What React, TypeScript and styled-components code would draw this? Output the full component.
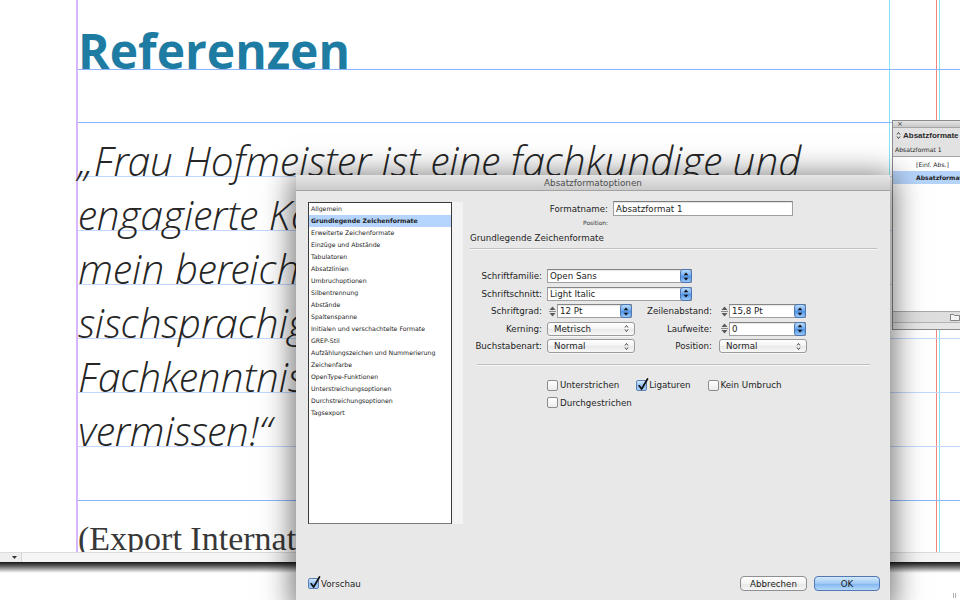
import React from "react";
import styled, { createGlobalStyle } from "styled-components";

const GlobalStyle = createGlobalStyle`
  html, body { margin: 0; padding: 0; background: #fff; }
  body { width: 960px; height: 600px; overflow: hidden; }
  * { box-sizing: border-box; }
`;

const UI = `"DejaVu Sans", "Lucida Grande", sans-serif`;

const Screen = styled.div`
  position: relative;
  width: 960px;
  height: 600px;
  overflow: hidden;
  display: flex;
  flex-direction: column;
  background: #fff;
`;

const DocView = styled.div`
  height: 552px;
  flex: none;
  display: flex;
  overflow: hidden;
  background-image: linear-gradient(
    to right,
    transparent 889px,
    #7fe6f6 889px,
    #7fe6f6 890px,
    transparent 890px,
    transparent 936px,
    #f2837f 936px,
    #f2837f 937px,
    transparent 937px,
    transparent 939px,
    #7fe6f6 939px,
    #7fe6f6 940px,
    transparent 940px
  );
`;

const Pasteboard = styled.div`
  width: 76px;
  flex: none;
`;

const PageColumn = styled.div`
  flex: 1;
  display: flex;
  flex-direction: column;
  border-left: 2px solid #d7b6ff;
`;

const Band = styled.div<{ $h: number; $tone: "guide" | "base"; $pt?: number }>`
  height: ${(p) => p.$h}px;
  flex: none;
  padding-top: ${(p) => p.$pt ?? 0}px;
  border-bottom: 1px solid ${(p) => (p.$tone === "guide" ? "#8db4ff" : "#c2d8ff")};
  white-space: nowrap;
`;

const Heading = styled.h1`
  margin: 0;
  font-family: "Open Sans", sans-serif;
  font-weight: 700;
  font-size: 48px;
  line-height: 1;
  color: #1e7ca3;
`;

const QuoteText = styled.div`
  font-family: "Open Sans Light", "Open Sans", sans-serif;
  font-style: italic;
  font-weight: 300;
  font-size: 41px;
  line-height: 1;
  color: #262626;
`;

const ExportText = styled.div`
  padding-top: 21px;
  font-family: "Liberation Serif", serif;
  font-size: 34px;
  line-height: 1;
  color: #383838;
  white-space: nowrap;
`;

const StatusStrip = styled.div`
  height: 10px;
  flex: none;
  display: flex;
  background: #f5f5f5;
  border-top: 1px solid #dcdcdc;
`;

const StatusCell = styled.div`
  width: 22px;
  display: flex;
  align-items: center;
  justify-content: flex-end;
  padding-right: 4px;
  border-right: 1px solid #d6d6d6;
  background: #eeeeee;
`;

const ShadowBand = styled.div`
  height: 11px;
  flex: none;
  background: linear-gradient(#161616, #5c5c5c 35%, #cfcfcf 80%, #ffffff);
`;

const Desk = styled.div`
  flex: 1;
  display: flex;
  justify-content: flex-end;
  align-items: flex-end;
  padding: 0 4px 2px 0;
`;

const Grip = styled.span`
  width: 3px;
  height: 5px;
  border-left: 1px solid #b0b0b0;
  border-right: 1px solid #b0b0b0;
`;

/* ---------- Absatzformate panel ---------- */

const Panel = styled.div`
  position: absolute;
  left: 892px;
  top: 120px;
  width: 90px;
  height: 210px;
  z-index: 2;
  display: flex;
  flex-direction: column;
  background: #e2e2e2;
  border: 1px solid #8c8c8c;
  font-family: ${UI};
  color: #1c1c1c;
`;

const PanelTitle = styled.div`
  height: 7px;
  flex: none;
  padding-left: 4px;
  font-size: 7px;
  line-height: 6px;
  color: #444;
  background: linear-gradient(#e4e4e4, #c8c8c8);
  border-bottom: 1px solid #a6a6a6;
`;

const PanelHeader = styled.div`
  height: 15px;
  flex: none;
  display: flex;
  align-items: center;
  gap: 2px;
  padding-left: 3px;
  font-family: "Liberation Sans", Arial, sans-serif;
  font-weight: 700;
  font-size: 8px;
  color: #2a2a2a;
`;

const PanelSub = styled.div`
  height: 14px;
  flex: none;
  padding-left: 2px;
  font-size: 6.1px;
  line-height: 13px;
  border-bottom: 1px solid #a4a4a4;
`;

const PanelList = styled.div`
  flex: 1;
  background: #fff;
  padding-top: 1px;
`;

const PanelItem = styled.div<{ $sel?: boolean }>`
  height: 13px;
  line-height: 13px;
  padding-left: 23px;
  font-size: 6.1px;
  white-space: nowrap;
  font-weight: ${(p) => (p.$sel ? 700 : 400)};
  background: ${(p) => (p.$sel ? "#b6d4fb" : "transparent")};
`;

const PanelFooter = styled.div`
  height: 12px;
  flex: none;
  display: flex;
  align-items: center;
  padding-left: 57px;
  background: #dedede;
  border-top: 1px solid #a8a8a8;
  border-bottom: 1px solid #b4b4b4;
`;

const PanelBase = styled.div`
  height: 6px;
  flex: none;
  background: #e6e6e6;
`;

/* ---------- Dialog ---------- */

const Dialog = styled.div`
  position: absolute;
  left: 296px;
  top: 175px;
  width: 594px;
  height: 430px;
  z-index: 3;
  display: flex;
  flex-direction: column;
  background: #e8e8e8;
  box-shadow: 0 4px 28px 4px rgba(0, 0, 0, 0.55);
  font-family: ${UI};
  font-size: 8.7px;
  color: #1e1e1e;
`;

const TitleBar = styled.div`
  height: 16px;
  flex: none;
  display: flex;
  align-items: center;
  justify-content: center;
  font-size: 8.8px;
  color: #4d4d4d;
  background: linear-gradient(#e6e6e6, #cbcbcb);
  border-bottom: 1px solid #a2a2a2;
`;

const Body = styled.div`
  flex: 1;
  display: flex;
  flex-direction: column;
  padding: 11px 10px 14px 12px;
`;

const Main = styled.div`
  display: flex;
  gap: 7px;
`;

const ListWrap = styled.div`
  width: 155px;
  height: 322px;
  flex: none;
  display: flex;
  background: #f3f3f3;
`;

const CategoryList = styled.ul`
  margin: 0;
  padding: 0;
  list-style: none;
  width: 144px;
  height: 100%;
  background: #fff;
  border: 1px solid #3a3a3a;
  border-bottom-color: #7a7a7a;
`;

const CategoryItem = styled.li<{ $sel?: boolean }>`
  height: 12px;
  line-height: 12px;
  padding-left: 2px;
  font-size: 6.2px;
  color: #222;
  white-space: nowrap;
  font-weight: ${(p) => (p.$sel ? 700 : 400)};
  background: ${(p) => (p.$sel ? "#b5d5fe" : "transparent")};
`;

const FormColumn = styled.div`
  width: 407px;
  display: flex;
  flex-direction: column;
`;

const NameRow = styled.div`
  margin-top: -1px;
  height: 15px;
  display: flex;
  align-items: center;
`;

const FieldLabel = styled.span<{ $w: number; $mr: number }>`
  width: ${(p) => p.$w}px;
  margin-right: ${(p) => p.$mr}px;
  flex: none;
  text-align: right;
  white-space: nowrap;
`;

const TextInput = styled.div<{ $w: number }>`
  width: ${(p) => p.$w}px;
  height: 15px;
  flex: none;
  display: flex;
  align-items: center;
  padding-left: 2px;
  background: #fff;
  border: 1px solid #9e9e9e;
  border-top-color: #7c7c7c;
  box-shadow: inset 0 1px 1px rgba(0, 0, 0, 0.12);
  white-space: nowrap;
`;

const TinyLabel = styled.div`
  width: 138px;
  margin-top: 3px;
  height: 9px;
  line-height: 9px;
  text-align: right;
  font-size: 5.9px;
  color: #333;
`;

const SectionTitle = styled.div`
  margin-top: 4px;
  height: 12px;
  line-height: 12px;
`;

const Rule = styled.div<{ $inset: number; $mt: number }>`
  margin: ${(p) => p.$mt}px ${(p) => p.$inset}px 0;
  height: 2px;
  flex: none;
  border-top: 1px solid #c0c0c0;
  border-bottom: 1px solid #f7f7f7;
`;

const FormGrid = styled.div`
  margin-top: 19px;
  display: flex;
  flex-direction: column;
  gap: 3.5px;
`;

const FormRow = styled.div`
  height: 14px;
  display: flex;
  align-items: center;
`;

const Cell = styled.div<{ $w: number }>`
  width: ${(p) => p.$w}px;
  flex: none;
  display: flex;
  align-items: center;
`;

const Combo = styled.div<{ $w: number }>`
  width: ${(p) => p.$w}px;
  height: 14px;
  flex: none;
  display: flex;
  align-items: center;
  background: #fff;
  border: 1px solid #a0a0a0;
  border-top-color: #858585;
  box-shadow: inset 0 1px 1px rgba(0, 0, 0, 0.1);
`;

const ComboText = styled.span`
  flex: 1;
  padding-left: 2px;
  white-space: nowrap;
`;

const BlueButton = styled.span`
  width: 12px;
  height: 14px;
  margin: -1px -1px -1px 0;
  flex: none;
  display: flex;
  align-items: center;
  justify-content: center;
  border: 1px solid #4d76b2;
  border-radius: 3px;
  background: linear-gradient(#b9dafb, #6aa6ee 50%, #4f92e6 55%, #9ccaf7);
`;

const StepperBox = styled.span`
  width: 10px;
  height: 14px;
  flex: none;
  display: flex;
  align-items: center;
  justify-content: center;
`;

const Popup = styled.div<{ $w: number }>`
  width: ${(p) => p.$w}px;
  height: 14px;
  flex: none;
  display: flex;
  align-items: center;
  padding: 0 5px 0 6px;
  border: 1px solid #9a9a9a;
  border-radius: 3px;
  background: linear-gradient(#ffffff, #f3f3f3 50%, #e9e9e9 52%, #f7f7f7);
  box-shadow: 0 1px 0 rgba(255, 255, 255, 0.6);
`;

const PopupText = styled.span`
  flex: 1;
  white-space: nowrap;
`;

const CheckArea = styled.div`
  margin-top: 13px;
  padding-left: 77px;
  display: flex;
  flex-direction: column;
  gap: 5.5px;
`;

const CheckRow = styled.div`
  display: flex;
  gap: 17px;
`;

const CheckItem = styled.label`
  height: 12px;
  display: flex;
  align-items: center;
  gap: 2px;
  white-space: nowrap;
`;

const CheckBox = styled.span<{ $on?: boolean }>`
  position: relative;
  width: 11px;
  height: 11px;
  flex: none;
  border-radius: 2px;
  border: 1px solid ${(p) => (p.$on ? "#5a80b6" : "#8c8c8c")};
  background: ${(p) =>
    p.$on
      ? "linear-gradient(#d4e8fc, #8dbdf2 55%, #a9d0f8)"
      : "linear-gradient(#ffffff, #ececec)"};
`;

const CheckMark = styled.svg`
  position: absolute;
  left: 0px;
  top: -3px;
`;

const Footer = styled.div`
  margin-top: auto;
  height: 15px;
  display: flex;
  align-items: center;
  gap: 7px;
`;

const Grow = styled.div`
  flex: 1;
`;

const PushButton = styled.button<{ $primary?: boolean; $w: number }>`
  width: ${(p) => p.$w}px;
  height: 15px;
  padding: 0;
  font-family: ${UI};
  font-size: 8.7px;
  color: #1a1a1a;
  border-radius: 4px;
  border: 1px solid ${(p) => (p.$primary ? "#4f78b5" : "#8f8f8f")};
  background: ${(p) =>
    p.$primary
      ? "linear-gradient(#d3e8fc, #9fc9f4 50%, #7fb5ef 52%, #b6d9fb)"
      : "linear-gradient(#ffffff, #f3f3f3 50%, #e6e6e6 52%, #f6f6f6)"};
`;

/* ---------- icons ---------- */

const UpDown = ({ color = "#111" }: { color?: string }) => (
  <svg width="6" height="9" viewBox="0 0 6 9">
    <path d="M3 0.5 L5.3 3.3 H0.7 Z" fill={color} />
    <path d="M3 8.5 L5.3 5.7 H0.7 Z" fill={color} />
  </svg>
);

const PopupArrows = () => (
  <svg width="5" height="9" viewBox="0 0 5 9">
    <path d="M1 3.5 L2.5 1.5 L4 3.5" fill="none" stroke="#333" strokeWidth="0.9" />
    <path d="M1 5.5 L2.5 7.5 L4 5.5" fill="none" stroke="#333" strokeWidth="0.9" />
  </svg>
);

const Stepper = () => (
  <StepperBox>
    <svg width="9" height="13" viewBox="0 0 9 13">
      <path d="M4.5 1.5 L7.5 5 H1.5 Z" fill="#5a5a5a" />
      <line x1="1" y1="6.5" x2="8" y2="6.5" stroke="#8a8a8a" strokeWidth="1" />
      <path d="M4.5 11.5 L7.5 8 H1.5 Z" fill="#5a5a5a" />
    </svg>
  </StepperBox>
);

const Check = ({ label, on }: { label: string; on?: boolean }) => (
  <CheckItem>
    <CheckBox $on={on}>
      {on && (
        <CheckMark width="12" height="13" viewBox="0 0 12 13">
          <path d="M2.2 7.8 L4.6 11 L10.5 1" fill="none" stroke="#111" strokeWidth="1.7" strokeLinecap="round" strokeLinejoin="round" />
        </CheckMark>
      )}
    </CheckBox>
    {label}
  </CheckItem>
);

const ComboField = ({ w, value }: { w: number; value: string }) => (
  <Combo $w={w}>
    <ComboText>{value}</ComboText>
    <BlueButton>
      <UpDown />
    </BlueButton>
  </Combo>
);

const PopupField = ({ w, value }: { w: number; value: string }) => (
  <Popup $w={w}>
    <PopupText>{value}</PopupText>
    <PopupArrows />
  </Popup>
);

const FolderIcon = () => (
  <svg width="10" height="8" viewBox="0 0 10 8">
    <path d="M0.5 1.5 H3.5 L4.5 2.5 H9.5 V7.5 H0.5 Z" fill="#f4f4f4" stroke="#6a6a6a" strokeWidth="0.8" />
  </svg>
);

const categories = [
  "Allgemein",
  "Grundlegende Zeichenformate",
  "Erweiterte Zeichenformate",
  "Einzüge und Abstände",
  "Tabulatoren",
  "Absatzlinien",
  "Umbruchoptionen",
  "Silbentrennung",
  "Abstände",
  "Spaltenspanne",
  "Initialen und verschachtelte Formate",
  "GREP-Stil",
  "Aufzählungszeichen und Nummerierung",
  "Zeichenfarbe",
  "OpenType-Funktionen",
  "Unterstreichungsoptionen",
  "Durchstreichungsoptionen",
  "Tagsexport",
];

/* only the part of each line that is not hidden behind the dialog */
const quoteLines = [
  "„Frau Hofmeister ist eine fachkundige und",
  "engagierte Ko",
  "mein bereich",
  "sischsprachig",
  "Fachkenntnis",
  "vermissen!“",
];

export default function App() {
  return (
    <Screen>
      <GlobalStyle />
      <DocView>
        <Pasteboard />
        <PageColumn>
          <Band $h={70} $tone="guide" $pt={27}>
            <Heading>Referenzen</Heading>
          </Band>
          <Band $h={53} $tone="guide" />
          {quoteLines.map((line) => (
            <Band key={line} $h={54} $tone="base" $pt={17}>
              <QuoteText>{line}</QuoteText>
            </Band>
          ))}
          <Band $h={54} $tone="guide" />
          <ExportText>(Export Internat</ExportText>
        </PageColumn>
      </DocView>
      <StatusStrip>
        <StatusCell>
          <svg width="5" height="3" viewBox="0 0 5 3">
            <path d="M0 0 H5 L2.5 3 Z" fill="#333" />
          </svg>
        </StatusCell>
      </StatusStrip>
      <ShadowBand />
      <Desk>
        <Grip />
      </Desk>

      <Panel>
        <PanelTitle>×</PanelTitle>
        <PanelHeader>
          <PopupArrows />
          Absatzformate
        </PanelHeader>
        <PanelSub>Absatzformat 1</PanelSub>
        <PanelList>
          <PanelItem>[Einf. Abs.]</PanelItem>
          <PanelItem $sel>Absatzformat</PanelItem>
        </PanelList>
        <PanelFooter>
          <FolderIcon />
        </PanelFooter>
        <PanelBase />
      </Panel>

      <Dialog>
        <TitleBar>Absatzformatoptionen</TitleBar>
        <Body>
          <Main>
            <ListWrap>
              <CategoryList>
                {categories.map((c, i) => (
                  <CategoryItem key={c} $sel={i === 1}>
                    {c}
                  </CategoryItem>
                ))}
              </CategoryList>
            </ListWrap>
            <FormColumn>
              <NameRow>
                <FieldLabel $w={138} $mr={5}>Formatname:</FieldLabel>
                <TextInput $w={180}>Absatzformat 1</TextInput>
              </NameRow>
              <TinyLabel>Position:</TinyLabel>
              <SectionTitle>Grundlegende Zeichenformate</SectionTitle>
              <Rule $inset={0} $mt={4} />
              <FormGrid>
                <FormRow>
                  <FieldLabel $w={72} $mr={5}>Schriftfamilie:</FieldLabel>
                  <ComboField w={145} value="Open Sans" />
                </FormRow>
                <FormRow>
                  <FieldLabel $w={72} $mr={5}>Schriftschnitt:</FieldLabel>
                  <ComboField w={145} value="Light Italic" />
                </FormRow>
                <FormRow>
                  <FieldLabel $w={72} $mr={5}>Schriftgrad:</FieldLabel>
                  <Cell $w={88}>
                    <Stepper />
                    <ComboField w={75} value="12 Pt" />
                  </Cell>
                  <FieldLabel $w={77} $mr={7}>Zeilenabstand:</FieldLabel>
                  <Cell $w={88}>
                    <Stepper />
                    <ComboField w={77} value="15,8 Pt" />
                  </Cell>
                </FormRow>
                <FormRow>
                  <FieldLabel $w={72} $mr={5}>Kerning:</FieldLabel>
                  <Cell $w={88}>
                    <PopupField w={88} value="Metrisch" />
                  </Cell>
                  <FieldLabel $w={77} $mr={7}>Laufweite:</FieldLabel>
                  <Cell $w={88}>
                    <Stepper />
                    <ComboField w={77} value="0" />
                  </Cell>
                </FormRow>
                <FormRow>
                  <FieldLabel $w={72} $mr={5}>Buchstabenart:</FieldLabel>
                  <Cell $w={88}>
                    <PopupField w={88} value="Normal" />
                  </Cell>
                  <FieldLabel $w={77} $mr={7}>Position:</FieldLabel>
                  <Cell $w={88}>
                    <PopupField w={88} value="Normal" />
                  </Cell>
                </FormRow>
              </FormGrid>
              <Rule $inset={7} $mt={11} />
              <CheckArea>
                <CheckRow>
                  <Check label="Unterstrichen" />
                  <Check label="Ligaturen" on />
                  <Check label="Kein Umbruch" />
                </CheckRow>
                <CheckRow>
                  <Check label="Durchgestrichen" />
                </CheckRow>
              </CheckArea>
            </FormColumn>
          </Main>
          <Footer>
            <Check label="Vorschau" on />
            <Grow />
            <PushButton $w={67}>Abbrechen</PushButton>
            <PushButton $w={66} $primary>OK</PushButton>
          </Footer>
        </Body>
      </Dialog>
    </Screen>
  );
}
